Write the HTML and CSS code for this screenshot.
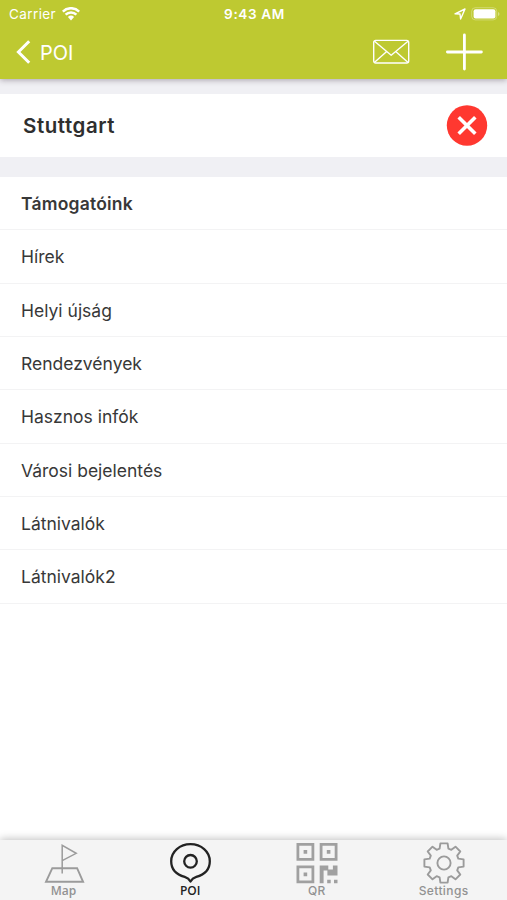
FILE: index.html
```
<!DOCTYPE html>
<html lang="hu">
<head>
  <meta charset="UTF-8" />
  <meta name="viewport" content="width=device-width, initial-scale=1.0"/>
  <title>POI</title>
  <link rel="stylesheet" href="styles.css">
</head>
<body>

  <header>
    <div class="status">
      <div class="carrier">
        <span>Carrier</span>
        <svg width="18" height="14" viewBox="0 0 18 14">
          <path d="M.8 4.6a11.6 11.6 0 0 1 16.4 0M3.6 7.6a7.700 7.700 0 0 1 10.800 0" fill="none" stroke="#fff" stroke-width="2.500"/>
          <path d="M5.900 10a4.600 4.600 0 0 1 6.200 0L9 13.400z" fill="#fff"/>
        </svg>
      </div>
      <span class="time">9:43 AM</span>
      <div class="battery">
        <svg width="12" height="12" viewBox="0 0 12 12">
          <path d="M1 5.800L11 1 6.600 11 6 6z" fill="none" stroke="#fff" stroke-width="1.400" stroke-linejoin="round"/>
        </svg>
        <svg width="29" height="14" viewBox="0 0 29 14">
          <rect x=".7" y=".7" width="25" height="12.200" rx="3.600" fill="none" stroke="#fff" stroke-opacity=".3"/>
          <rect x="2.600" y="2.200" width="21.800" height="9.200" rx="2" fill="#fff"/>
          <path d="M27 5v4q1.500-.6 1.500-2T27 5z" fill="#fff" fill-opacity=".4"/>
        </svg>
      </div>
    </div>
    <nav class="navbar">
      <a class="back">
        <svg width="16" height="26" viewBox="0 0 16 26">
          <path d="M14.200 2.200L3.400 13l10.800 10.800" fill="none" stroke="#fff" stroke-width="3"/>
        </svg>
        <span>POI</span>
      </a>
      <div class="actions">
        <svg width="38" height="26" viewBox="0 0 38 26">
          <g fill="none" stroke="#fff" stroke-width="1.400" stroke-linejoin="round">
            <rect x="1.700" y="1.400" width="35" height="22.600" rx="2"/>
            <path d="M2.500 2.200l16.700 14L36 2.200M2.300 23.400l12.400-11M36.100 23.400l-12.400-11"/>
          </g>
        </svg>
        <svg width="38" height="38" viewBox="0 0 38 38">
          <path d="M19.400 2v34M2.400 19h34" stroke="#fff" stroke-width="2.800" stroke-linecap="round"/>
        </svg>
      </div>
    </nav>
  </header>

  <main>
    <section class="city">
      <h1>Stuttgart</h1>
      <svg width="42" height="42" viewBox="0 0 42 42">
        <circle cx="21" cy="20.500" r="20.200" fill="#ff3830"/>
        <path d="M12.700 12.200l16.600 16.600M29.300 12.200L12.700 28.800" stroke="#fff" stroke-width="3.600"/>
      </svg>
    </section>

    <ul class="categories">
      <li class="active">Támogatóink</li>
      <li>Hírek</li>
      <li>Helyi újság</li>
      <li>Rendezvények</li>
      <li>Hasznos infók</li>
      <li>Városi bejelentés</li>
      <li>Látnivalók</li>
      <li>Látnivalók2</li>
    </ul>
  </main>

  <!-- Tab bar -->
  <footer>
    <a class="tab">
      <svg width="44" height="44" viewBox="0 0 44 44">
        <g fill="none" stroke="#9b9b9b">
          <path d="M11.300 28.200h24.800l6 13.600H5z" stroke-width="1.900"/>
          <path d="M21.200 33.500V5.300l14 8-14 7.400" stroke-width="1.500"/>
        </g>
      </svg>
      <span>Map</span>
    </a>
    <a class="tab selected">
      <svg width="44" height="44" viewBox="0 0 44 44">
        <g fill="none" stroke="#222" stroke-width="2.300" stroke-linejoin="round">
          <path d="M22.500 41.500q-1.800-3.400-5.800-4.600C8 34.400 3.200 28.800 3.200 21.200 3.200 11.700 11.800 4.200 22.500 4.200s19.300 7.500 19.300 17c0 7.600-4.800 13.200-13.500 15.700q-4 1.200-5.800 4.600z"/>
          <circle cx="22.500" cy="21.300" r="6.300"/>
        </g>
      </svg>
      <span>POI</span>
    </a>
    <a class="tab sf">
      <svg width="44" height="44" viewBox="0 0 44 44">
        <g fill="none" stroke="#a0a0a0" stroke-width="2.800">
          <path d="M2.900 4.400h15v15h-15zM26.100 4.400h15v15h-15zM2.900 26.900h15v15h-15z"/>
        </g>
        <g fill="#a0a0a0">
          <path d="M8.600 10.100h3.600v3.600H8.600zM31.800 10.100h3.600v3.600h-3.600zM8.600 32.600h3.600v3.600H8.600z"/>
          <path d="M24.700 25.500h8.600v4h4.600v-4h4.600v10H32.400v-5h-3.800v12.800h-3.900zM32.200 39.700h3.500v3.600h-3.500zM39 39.700h3.500v3.600H39z"/>
        </g>
      </svg>
      <span>QR</span>
    </a>
    <a class="tab sf">
      <svg width="44" height="44" viewBox="-22 -23 44 44">
        <g fill="none" stroke="#9b9b9b" stroke-width="1.900" stroke-linejoin="round">
          <path d="M-4.400-14.300L-3.600-19.600H3.600L4.400-14.300 7.350-13.200 11.500-16.300 16.300-11.500 13.200-7.350 14.300-4.400 19.600-3.600V3.600L14.300 4.400 13.200 7.350 16.300 11.500 11.500 16.300 7.350 13.200 4.400 14.300 3.600 19.600H-3.600L-4.400 14.300-7.350 13.200-11.500 16.300-16.300 11.500-13.200 7.350-14.300 4.400-19.600 3.600V-3.600L-14.300-4.400-13.200-7.350-16.300-11.500-11.500-16.300-7.350-13.200z"/>
          <circle r="6.600"/>
        </g>
      </svg>
      <span>Settings</span>
    </a>
  </footer>

</body>
</html>
```
FILE: styles.css
```
body {
  font-family: Inter, "Liberation Sans", sans-serif;
  background-color: #fff;
  color: #383838;
  margin: 0;
  height: 900px;
  display: flex;
  flex-direction: column;
  overflow: hidden;
}
svg {
  display: block;
  flex: none;
}
header {
  height: 79px;
  background-color: #bec931;
  color: #fff;
  box-shadow: 0 1px 6px rgba(60,40,60,0.4);
  z-index: 1;
}
.status {
  display: grid;
  grid-template-columns: 1fr auto 1fr;
  align-items: center;
  height: 27px;
  padding: 0 7px 0 9px;
  font-size: 13.5px;
}
.carrier {
  display: flex;
  align-items: center;
  gap: 6px;
  letter-spacing: 0.4px;
}
.time {
  font-size: 13.6px;
  font-weight: 600;
  letter-spacing: 0.6px;
}
.battery {
  display: flex;
  align-items: center;
  justify-content: flex-end;
  gap: 5px;
}
.navbar {
  display: flex;
  align-items: center;
  justify-content: space-between;
  height: 50px;
  padding: 0 24px 0 15px;
}
.back {
  display: flex;
  align-items: center;
  gap: 9px;
  font-size: 20px;
}
.back span {
  padding-top: 1px;
}
.actions {
  display: flex;
  align-items: center;
  gap: 35px;
}
main {
  flex: 1;
}
.city {
  display: flex;
  align-items: center;
  justify-content: space-between;
  height: 63px;
  padding: 0 19px 0 23px;
  border-top: 15px solid #f0f0f4;
  border-bottom: 20px solid #f0f0f4;
}
h1 {
  margin: 0;
  font-size: 20.5px;
  font-weight: 600;
  letter-spacing: 0.55px;
  color: #2e2e2e;
}
.categories {
  list-style: none;
  margin: 0;
  padding: 0;
}
.categories li {
  box-sizing: border-box;
  height: 53.35px;
  padding-left: 21px;
  border-bottom: 1px solid #f3f3f4;
  font-size: 17.5px;
  line-height: 54px;
}
.categories .active {
  font-weight: 600;
  letter-spacing: 0.2px;
}
footer {
  display: grid;
  grid-template-columns: repeat(4, 1fr);
  height: 60px;
  background-color: #f4f4f4;
  box-shadow: 0 -1px 8px rgba(0,0,0,0.25);
}
.tab {
  display: flex;
  flex-direction: column;
  align-items: center;
  color: #929292;
  font-family: "Open Sans", sans-serif;
  font-size: 12px;
  font-weight: 600;
  line-height: 14px;
}
.selected {
  color: #222;
}
.sf {
  font-family: Inter, sans-serif;
  font-weight: 500;
  letter-spacing: 0.4px;
}
```
